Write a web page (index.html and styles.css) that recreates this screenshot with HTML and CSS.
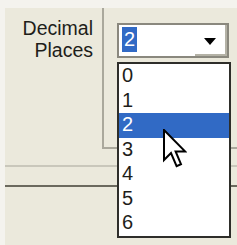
FILE: index.html
```html
<!DOCTYPE html>
<html lang="en">
  <head>
    <meta charset="UTF-8" />
    <meta name="viewport" content="width=device-width, initial-scale=1.0" />
    <title>Decimal Places</title>
    <link rel="stylesheet" href="styles.css">
  </head>
  <body>
    <div class="ventana">
      <div class="fila">
        <div class="etiqueta">
          <span>Decimal</span>
          <span>Places</span>
        </div>
        <div class="marco">
          <div class="combo">
            <span class="valor">2</span>
            <span class="boton">
              <svg width="12" height="7" viewBox="0 0 12 7"><polygon points="0,0 12,0 6,7" fill="#000" /></svg>
            </span>
          </div>
        </div>
      </div>
      <div class="linea clara"></div>
      <div class="linea oscura"></div>

      <!-- lista desplegada del combo, encima del resto -->
      <ul class="lista">
        <li>0</li>
        <li>1</li>
        <li class="activa">2</li>
        <li>3</li>
        <li>4</li>
        <li>5</li>
        <li>6</li>
      </ul>

      <svg class="cursor" width="24" height="40" viewBox="0 0 12 20">
        <polygon points="0.5,0.5 0.5,15.5 4,12 6.8,18.6 9,17.6 6.3,11.2 11,11.2" fill="#fff" stroke="#000" stroke-width="1" stroke-linejoin="miter" />
      </svg>
    </div>
  </body>
</html>
```

FILE: styles.css
```css
body {
  margin: 0;
  background-color: #f4f3ee;
  font-family: "Liberation Sans", Arial, sans-serif;
  color: #1e1e1a;
}

/* Fondo beige de la ventana, un poco desplazado de la esquina */
.ventana {
  position: relative;
  margin: 8px 0 0 5px;
  min-height: 237px;
  background-color: #ebe9dc;
}

.fila {
  display: flex;
}

/* Cada línea de la etiqueta en su propio bloque */
.etiqueta {
  display: flex;
  flex-direction: column;
  align-items: flex-end;
  width: 97px;
  box-sizing: border-box;
  padding: 10px 9px 0 0;
  font-size: 19.5px;
  line-height: 21.5px;
}

/* Celda con el borde a la izquierda y abajo */
.marco {
  flex: 1;
  height: 141px;
  box-sizing: border-box;
  border-left: 2px solid #aaa89c;
  border-bottom: 2px solid #aaa89c;
}

.combo {
  display: flex;
  justify-content: space-between;
  width: 112px;
  height: 35px;
  box-sizing: border-box;
  margin: 15px 0 0 13px;
  border: 2px solid #8a887e;
  background-color: #fff;
}

.valor {
  margin: 2px 0 0 3px;
  height: 25px;
  padding: 0 2px;
  line-height: 25px;
  font-size: 20px;
  color: #fff;
  background-color: #316ac5;
}

.boton {
  display: flex;
  align-items: center;
  justify-content: center;
  width: 32px;
  box-sizing: border-box;
  padding-top: 4px;
  border-right: 2px solid #b4b2a6;
  border-bottom: 2px solid #b4b2a6;
}

.linea {
  height: 2px;
}

.clara {
  margin-top: 16px;
  background-color: #c9c7bb;
}

.oscura {
  margin-top: 18px;
  background-color: #6b695e;
}

.lista {
  position: absolute;
  left: 112px;
  top: 54px;
  width: 114px;
  height: 176px;
  box-sizing: border-box;
  margin: 0;
  padding: 0;
  list-style: none;
  border: 2px solid #2e2e2a;
  background-color: #fff;
  display: grid;
  grid-template-rows: repeat(7, 1fr);
}

.lista li {
  padding-left: 3px;
  font-size: 20px;
  line-height: 22px;
}

.lista .activa {
  color: #fff;
  background-color: #316ac5;
}

.cursor {
  position: absolute;
  left: 158px;
  top: 121px;
}
```
